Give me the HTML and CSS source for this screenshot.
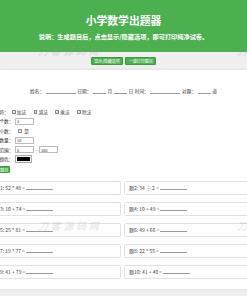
FILE: index.html
```html
<!DOCTYPE html>
<html lang="zh-CN">
<head>
<meta charset="utf-8">
<title>小学数学出题器</title>
<link rel="stylesheet" href="styles.css">
</head>
<body>
<header class="hero">
  <h1 class="hero-title">小学数学出题器</h1>
  <p class="hero-note">说明：生成题目后，点击显示/隐藏选项，即可打印纯净试卷。</p>
</header>
<div class="toolbar">
  <button class="tool-btn" type="button">显示/隐藏选项</button>
  <button class="tool-btn" type="button">一键打印题目</button>
</div>
<main class="sheet">
  <div class="sheet-inner">
    <div class="info">
      <span>姓名：</span><span class="blank long"></span>
      <span>日期：</span><span class="blank short"></span><span>月</span><span class="blank short"></span><span>日</span>
      <span>时间：</span><span class="blank long"></span>
      <span>对题：</span><span class="blank short"></span><span>道</span>
    </div>
    <form class="options">
      <div class="opt-row">
        <span class="opt-label">运算符：</span>
        <label class="opt-check"><input class="cb" type="checkbox" checked>加法</label>
        <label class="opt-check"><input class="cb" type="checkbox" checked>减法</label>
        <label class="opt-check"><input class="cb" type="checkbox" checked>乘法</label>
        <label class="opt-check"><input class="cb" type="checkbox" checked>除法</label>
      </div>
      <div class="opt-row">
        <span class="opt-label">数字个数：</span>
        <input class="txt" type="text" value="2">
      </div>
      <div class="opt-row">
        <span class="opt-label">包含小数：</span>
        <label class="opt-check"><input class="cb cb-gap" type="checkbox">是</label>
      </div>
      <div class="opt-row">
        <span class="opt-label">题目数量：</span>
        <input class="txt" type="text" value="10">
      </div>
      <div class="opt-row">
        <span class="opt-label">数字范围：</span>
        <input class="txt" type="text" value="0">
        <span class="dash">-</span>
        <input class="txt" type="text" value="100">
      </div>
      <div class="opt-row">
        <span class="opt-label">字体颜色：</span>
        <input class="color" type="color" value="#000000">
      </div>
      <button class="gen-btn" type="button">生成题目</button>
    </form>
    <div class="grid">
      <div class="q">题1: 52 * 48 = <span class="blank ans"></span></div>
      <div class="q">题2: 34 ÷ 2 = <span class="blank ans"></span></div>
      <div class="q">题3: 10 + 74 = <span class="blank ans"></span></div>
      <div class="q">题4: 10 + 49 = <span class="blank ans"></span></div>
      <div class="q">题5: 25 * 81 = <span class="blank ans"></span></div>
      <div class="q">题6: 49 + 66 = <span class="blank ans"></span></div>
      <div class="q">题7: 19 * 77 = <span class="blank ans"></span></div>
      <div class="q">题8: 22 * 55 = <span class="blank ans"></span></div>
      <div class="q">题9: 41 + 79 = <span class="blank ans"></span></div>
      <div class="q">题10: 41 + 40 = <span class="blank ans"></span></div>
    </div>
  </div>
</main>
<div class="wm wm1">刀客源码网</div>
<div class="wm wm2">刀客源码网</div>
<div class="wm wm3">刀客源码网</div>
<div class="wm wm4">刀客源码网</div>
</body>
</html>
```
FILE: styles.css
```css
html {
  overflow: hidden;
}
body {
  margin: 0;
  background: #f0f0f0;
  font-family: "Noto Sans CJK SC", "Liberation Sans", sans-serif;
  color: #333;
  display: flex;
  flex-direction: column;
  align-items: center;
  position: relative;
  min-height: 296px;
}
.hero {
  align-self: stretch;
  background: #4caf50;
  color: #fff;
  text-align: center;
  height: 52px;
  box-sizing: border-box;
  padding-top: 12.5px;
}
.hero-title {
  margin: 0;
  font-size: 10.8px;
  line-height: 14px;
  font-weight: bold;
}
.hero-note {
  margin: 6.5px 0 0;
  font-size: 6.2px;
  line-height: 8px;
  font-weight: bold;
}
.toolbar {
  align-self: stretch;
  height: 18px;
  box-sizing: border-box;
  padding-top: 5px;
  display: flex;
  justify-content: center;
  align-items: flex-start;
  gap: 2px;
}
.tool-btn {
  height: 7.5px;
  padding: 0 2.5px;
  border: 0.5px solid #3e9a42;
  border-radius: 1px;
  background: #4caf50;
  color: #fff;
  font-family: inherit;
  font-size: 4px;
  line-height: 6px;
}
.sheet {
  align-self: stretch;
  background: #fff;
  box-shadow: 0 0 3px rgba(0, 0, 0, 0.12);
  display: flex;
  flex-direction: column;
  align-items: center;
  padding: 16.7px 0 10.5px;
}
.sheet-inner {
  width: 265px;
  margin-right: 2px;
  flex-shrink: 0;
}
.info {
  display: flex;
  justify-content: center;
  align-items: center;
  font-size: 4.7px;
  line-height: 8px;
  gap: 1.6px;
  margin-left: 2px;
}
.blank {
  display: inline-block;
  border-bottom: 0.6px solid #999;
  height: 5px;
}
.blank.long {
  width: 30px;
}
.blank.short {
  width: 13px;
}
.options {
  margin: 12.6px 0 0;
  padding-left: 0;
  font-size: 4.7px;
}
.opt-row {
  display: flex;
  align-items: center;
  height: 9.4px;
}
.opt-label {
  margin-right: 1.6px;
  white-space: nowrap;
}
.opt-check {
  display: flex;
  align-items: center;
  margin-right: 6px;
}
.cb {
  appearance: none;
  -webkit-appearance: none;
  width: 3.6px;
  height: 3.6px;
  margin: 0 1.2px 0 1.6px;
  border: 0.5px solid #888;
  border-radius: 0.5px;
  background: #fff;
  box-sizing: border-box;
}
.cb:checked {
  background: #fff url("data:image/svg+xml,%3Csvg xmlns='http://www.w3.org/2000/svg' viewBox='0 0 10 10'%3E%3Cpath d='M2 5.2l2 2 4-4.4' fill='none' stroke='%23333' stroke-width='1.8'/%3E%3C/svg%3E") center / 100% 100% no-repeat;
}
.cb-gap {
  margin-left: 3.2px;
  margin-right: 2.5px;
  background: #eee;
}
.txt {
  width: 19px;
  height: 7px;
  box-sizing: border-box;
  border: 0.5px solid #bbb;
  padding: 0 1px;
  margin: 0;
  font-family: inherit;
  font-size: 4px;
  color: #333;
}
.dash {
  margin: 0 1.6px;
}
.color {
  width: 17px;
  height: 8px;
  padding: 0;
  margin: 0;
  border: 0.5px solid #aaa;
  background: #f4f4f4;
  box-sizing: border-box;
}
.color::-webkit-color-swatch-wrapper {
  padding: 1px;
}
.color::-webkit-color-swatch {
  border: none;
}
.gen-btn {
  display: block;
  margin-top: 2.3px;
  height: 7px;
  padding: 0 1.2px;
  border: 0.5px solid #3e9a42;
  border-radius: 1px;
  background: #4caf50;
  color: #fff;
  font-family: inherit;
  font-size: 4px;
  line-height: 6px;
}
.grid {
  margin-top: 8px;
  display: grid;
  grid-template-columns: 1fr 1fr;
  column-gap: 3px;
  row-gap: 7px;
}
.q {
  height: 14px;
  box-sizing: border-box;
  border: 1px solid #e2e2e2;
  border-radius: 1.5px;
  padding-left: 4px;
  display: flex;
  align-items: center;
  font-size: 5px;
  white-space: pre;
  color: #444;
}
.q .blank.ans {
  width: 27px;
  height: 4px;
}
.wm {
  position: absolute;
  font-size: 10px;
  letter-spacing: 2.6px;
  font-weight: bold;
  font-style: italic;
  color: rgba(150, 150, 150, 0.22);
  white-space: nowrap;
  pointer-events: none;
  line-height: 10px;
}
.wm1 { left: 38px; top: 46px; }
.wm2 { left: 237px; top: 46px; }
.wm3 { left: 38px; top: 221px; }
.wm4 { left: 237px; top: 221px; }
```
